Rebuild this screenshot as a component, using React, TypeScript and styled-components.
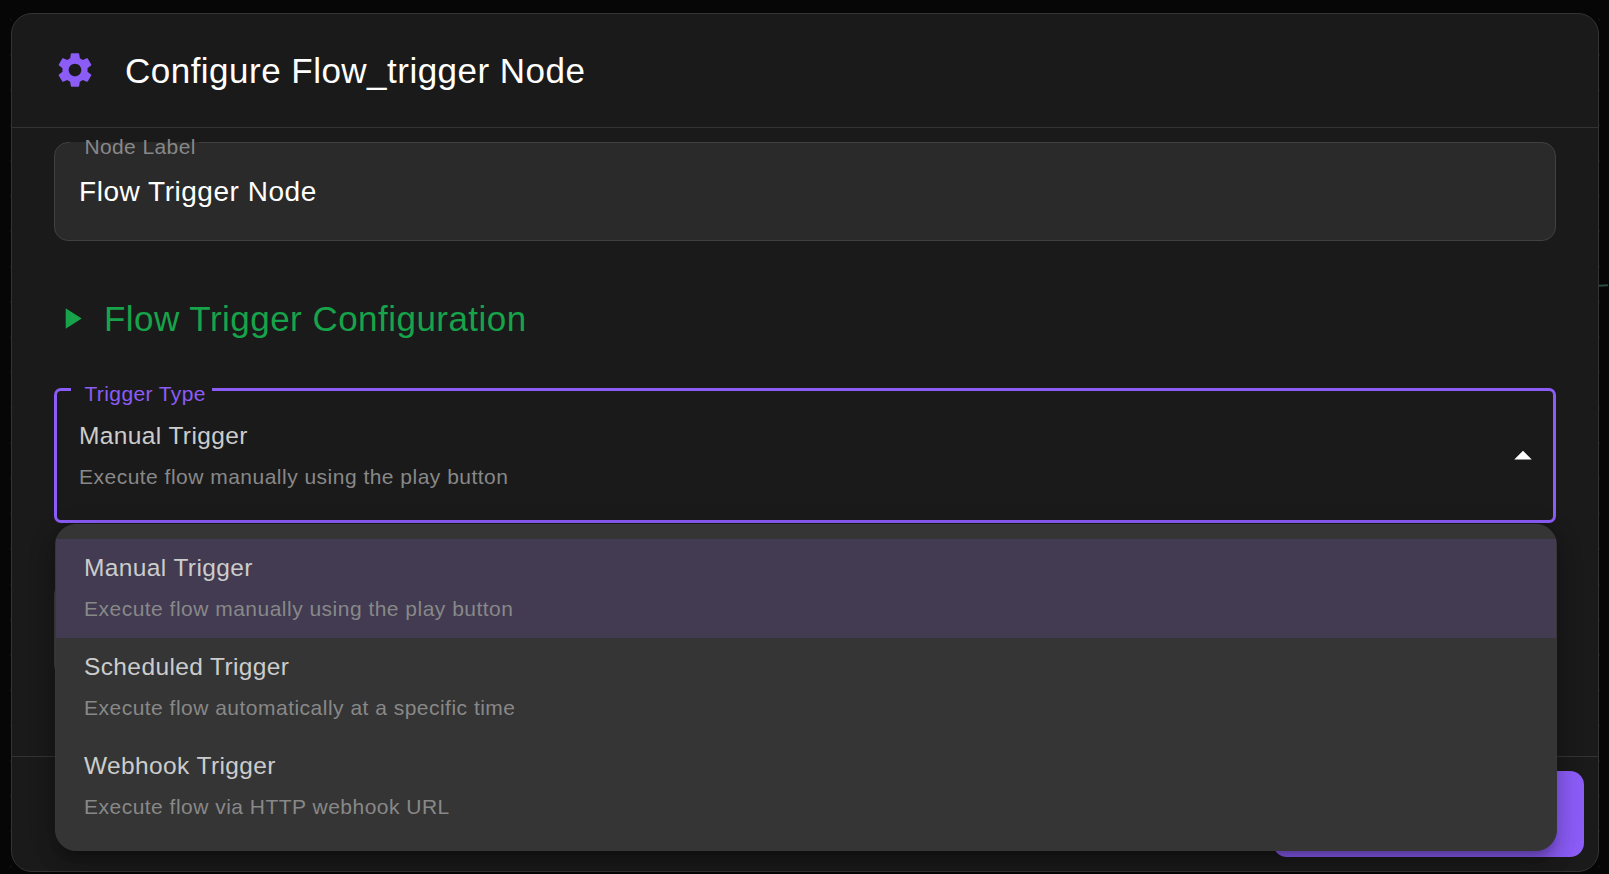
import React from "react";
import styled, { createGlobalStyle } from "styled-components";

const Global = createGlobalStyle`
  *, *::before, *::after { box-sizing: border-box; }
  html, body, #root { height: 100%; }
  body {
    margin: 0;
    overflow: hidden;
    background: #060606;
    color: #fff;
    font-family: "Liberation Sans", Arial, sans-serif;
  }
`;

const Backdrop = styled.div`
  position: relative;
  height: 874px;
  padding: 13px 10px 2px 11px;
  background-image: radial-gradient(circle at 10.5px 19.6px, #101010 0.9px, transparent 1.3px);
  background-size: 35.3px 35.3px;
`;

const Edge = styled.svg`
  position: absolute;
  left: 1599px;
  top: 280px;
`;

const Dialog = styled.section`
  position: relative;
  display: flex;
  flex-direction: column;
  height: 859px;
  border: 1px solid #333;
  border-radius: 21px;
  background: #1a1a1a;
`;

const Header = styled.header`
  display: flex;
  align-items: center;
  gap: 29px;
  flex: 0 0 114px;
  padding: 0 42px 1px;
  border-bottom: 1px solid #333;
`;

const Title = styled.h2`
  margin: 0;
  font-size: 35px;
  font-weight: 400;
  line-height: 56px;
  letter-spacing: 0.48px;
  padding-top: 2px;
`;

const Body = styled.div`
  flex: 1;
  min-height: 0;
  padding: 0 42px;
`;

const Field = styled.div<{ $h: number; $top: number; $filled?: boolean; $focus?: boolean }>`
  position: relative;
  display: flex;
  justify-content: space-between;
  align-items: center;
  height: ${(p) => p.$h}px;
  margin-top: ${(p) => p.$top}px;
  padding: ${(p) => (p.$focus ? "0 9.5px 0 22px" : "0 24px")};
  border: ${(p) => (p.$focus ? "3px solid #8b5cf6" : "1px solid #404040")};
  border-radius: ${(p) => (p.$focus ? 7 : 14)}px;
  background: ${(p) => (p.$filled ? "#2a2a2a" : "transparent")};
`;

const FieldLabel = styled.span<{ $focus?: boolean; $w: number }>`
  position: absolute;
  left: ${(p) => (p.$focus ? 14 : 15)}px;
  top: ${(p) => (p.$focus ? -9 : -8)}px;
  width: ${(p) => p.$w}px;
  padding-left: ${(p) => (p.$focus ? 13.4 : 14.4)}px;
  font-size: 21px;
  line-height: 24px;
  letter-spacing: 0.4px;
  white-space: nowrap;
  color: ${(p) => (p.$focus ? "#8b5cf6" : "#888")};
  background: linear-gradient(${(p) => (p.$focus ? "#1a1a1a, #1a1a1a" : "#2a2a2a, #2a2a2a")}) 0
    ${(p) => (p.$focus ? 6 : 7)}px / 100% ${(p) => (p.$focus ? 3 : 1)}px no-repeat;
`;

const Value = styled.span`
  font-size: 28px;
  line-height: 40px;
  letter-spacing: 0.53px;
`;

const SectionTitle = styled.h3`
  display: flex;
  align-items: center;
  gap: 15px;
  height: 56px;
  margin: 50px 0 0;
  color: #16a34a;
  font-size: 35px;
  font-weight: 400;
  line-height: 56px;
  letter-spacing: 0.47px;

  svg {
    margin-bottom: 2px;
  }
`;

const OptionText = styled.span`
  display: block;
`;

const ArrowBox = styled.span`
  display: flex;
  padding-top: 1px;
`;

const Primary = styled.span`
  display: block;
  font-size: 24.5px;
  line-height: 35px;
  letter-spacing: 0.385px;
  color: #ccc;
`;

const Secondary = styled.span`
  display: block;
  margin-top: 6px;
  font-size: 21px;
  line-height: 35px;
  letter-spacing: 0.485px;
  color: #888;
`;

const Menu = styled.ul`
  position: absolute;
  left: 43px;
  top: 510px;
  width: 1502px;
  height: 327px;
  margin: 0;
  padding: 14px 0;
  list-style: none;
  border: 1px solid #373737;
  border-radius: 21px;
  background: #353535;
  box-shadow: 0 9px 9px -5px rgba(0, 0, 0, 0.2), 0 14px 18px 2px rgba(0, 0, 0, 0.14),
    0 5px 25px 4px rgba(0, 0, 0, 0.12);
`;

const MenuItem = styled.li<{ $selected?: boolean }>`
  height: 99px;
  padding: 11px 28px 0;
  background: ${(p) => (p.$selected ? "#423b52" : "transparent")};
`;

const Footer = styled.footer`
  display: flex;
  justify-content: flex-end;
  flex: 0 0 115px;
  padding: 14px;
  border-top: 1px solid #333;
`;

const SaveButton = styled.button`
  width: 311px;
  height: 86px;
  border: 0;
  border-radius: 14px;
  background: #8b5cf6;
`;

const options = [
  ["Manual Trigger", "Execute flow manually using the play button"],
  ["Scheduled Trigger", "Execute flow automatically at a specific time"],
  ["Webhook Trigger", "Execute flow via HTTP webhook URL"],
];

const Icon = ({ d, size, color }: { d: string; size: number; color: string }) => (
  <svg width={size} height={size} viewBox="0 0 24 24" fill={color} aria-hidden="true">
    <path d={d} />
  </svg>
);

const GEAR =
  "M19.14 12.94c.04-.3.06-.61.06-.94 0-.32-.02-.64-.07-.94l2.03-1.58c.18-.14.23-.41.12-.61l-1.92-3.32c-.12-.22-.37-.29-.59-.22l-2.39.96c-.5-.38-1.03-.7-1.62-.94l-.36-2.54c-.04-.24-.24-.41-.48-.41h-3.84c-.24 0-.43.17-.47.41l-.36 2.54c-.59.24-1.13.57-1.62.94l-2.39-.96c-.22-.08-.47 0-.59.22L2.74 8.87c-.12.21-.08.47.12.61l2.03 1.58c-.05.3-.09.63-.09.94s.02.64.07.94l-2.03 1.58c-.18.14-.23.41-.12.61l1.92 3.32c.12.22.37.29.59.22l2.39-.96c.5.38 1.03.7 1.62.94l.36 2.54c.05.24.24.41.48.41h3.84c.24 0 .44-.17.47-.41l.36-2.54c.59-.24 1.13-.56 1.62-.94l2.39.96c.22.08.47 0 .59-.22l1.92-3.32c.12-.22.07-.47-.12-.61zM12 15.6c-1.98 0-3.6-1.62-3.6-3.6s1.62-3.6 3.6-3.6 3.6 1.62 3.6 3.6-1.62 3.6-3.6 3.6";

export default function App() {
  return (
    <>
      <Global />
      <Backdrop>
        <Edge width="10" height="10" aria-hidden="true">
          <path d="M0 5.8 L9 5.2" stroke="#2b4a42" strokeWidth="2" fill="none" />
        </Edge>
        <Dialog>
          <Header>
            <Icon d={GEAR} size={42} color="#8b5cf6" />
            <Title>Configure Flow_trigger Node</Title>
          </Header>
          <Body>
            <Field $h={99} $top={14} $filled>
              <FieldLabel $w={129}>Node Label</FieldLabel>
              <Value>Flow Trigger Node</Value>
            </Field>
            <SectionTitle>
              <Icon d="M8 5v14l11-7z" size={35} color="#16a34a" />
              Flow Trigger Configuration
            </SectionTitle>
            <Field $h={135} $top={41} $focus>
              <FieldLabel $w={141} $focus>
                Trigger Type
              </FieldLabel>
              <OptionText>
                <Primary>{options[0][0]}</Primary>
                <Secondary>{options[0][1]}</Secondary>
              </OptionText>
              <ArrowBox>
                <Icon d="M7 14l5-5 5 5z" size={42} color="#fff" />
              </ArrowBox>
            </Field>
            <Field $h={99} $top={57} />
          </Body>
          <Footer>
            <SaveButton aria-label="Save" />
          </Footer>
          <Menu>
            {options.map(([name, hint], i) => (
              <MenuItem key={name} $selected={i === 0}>
                <Primary>{name}</Primary>
                <Secondary>{hint}</Secondary>
              </MenuItem>
            ))}
          </Menu>
        </Dialog>
      </Backdrop>
    </>
  );
}
